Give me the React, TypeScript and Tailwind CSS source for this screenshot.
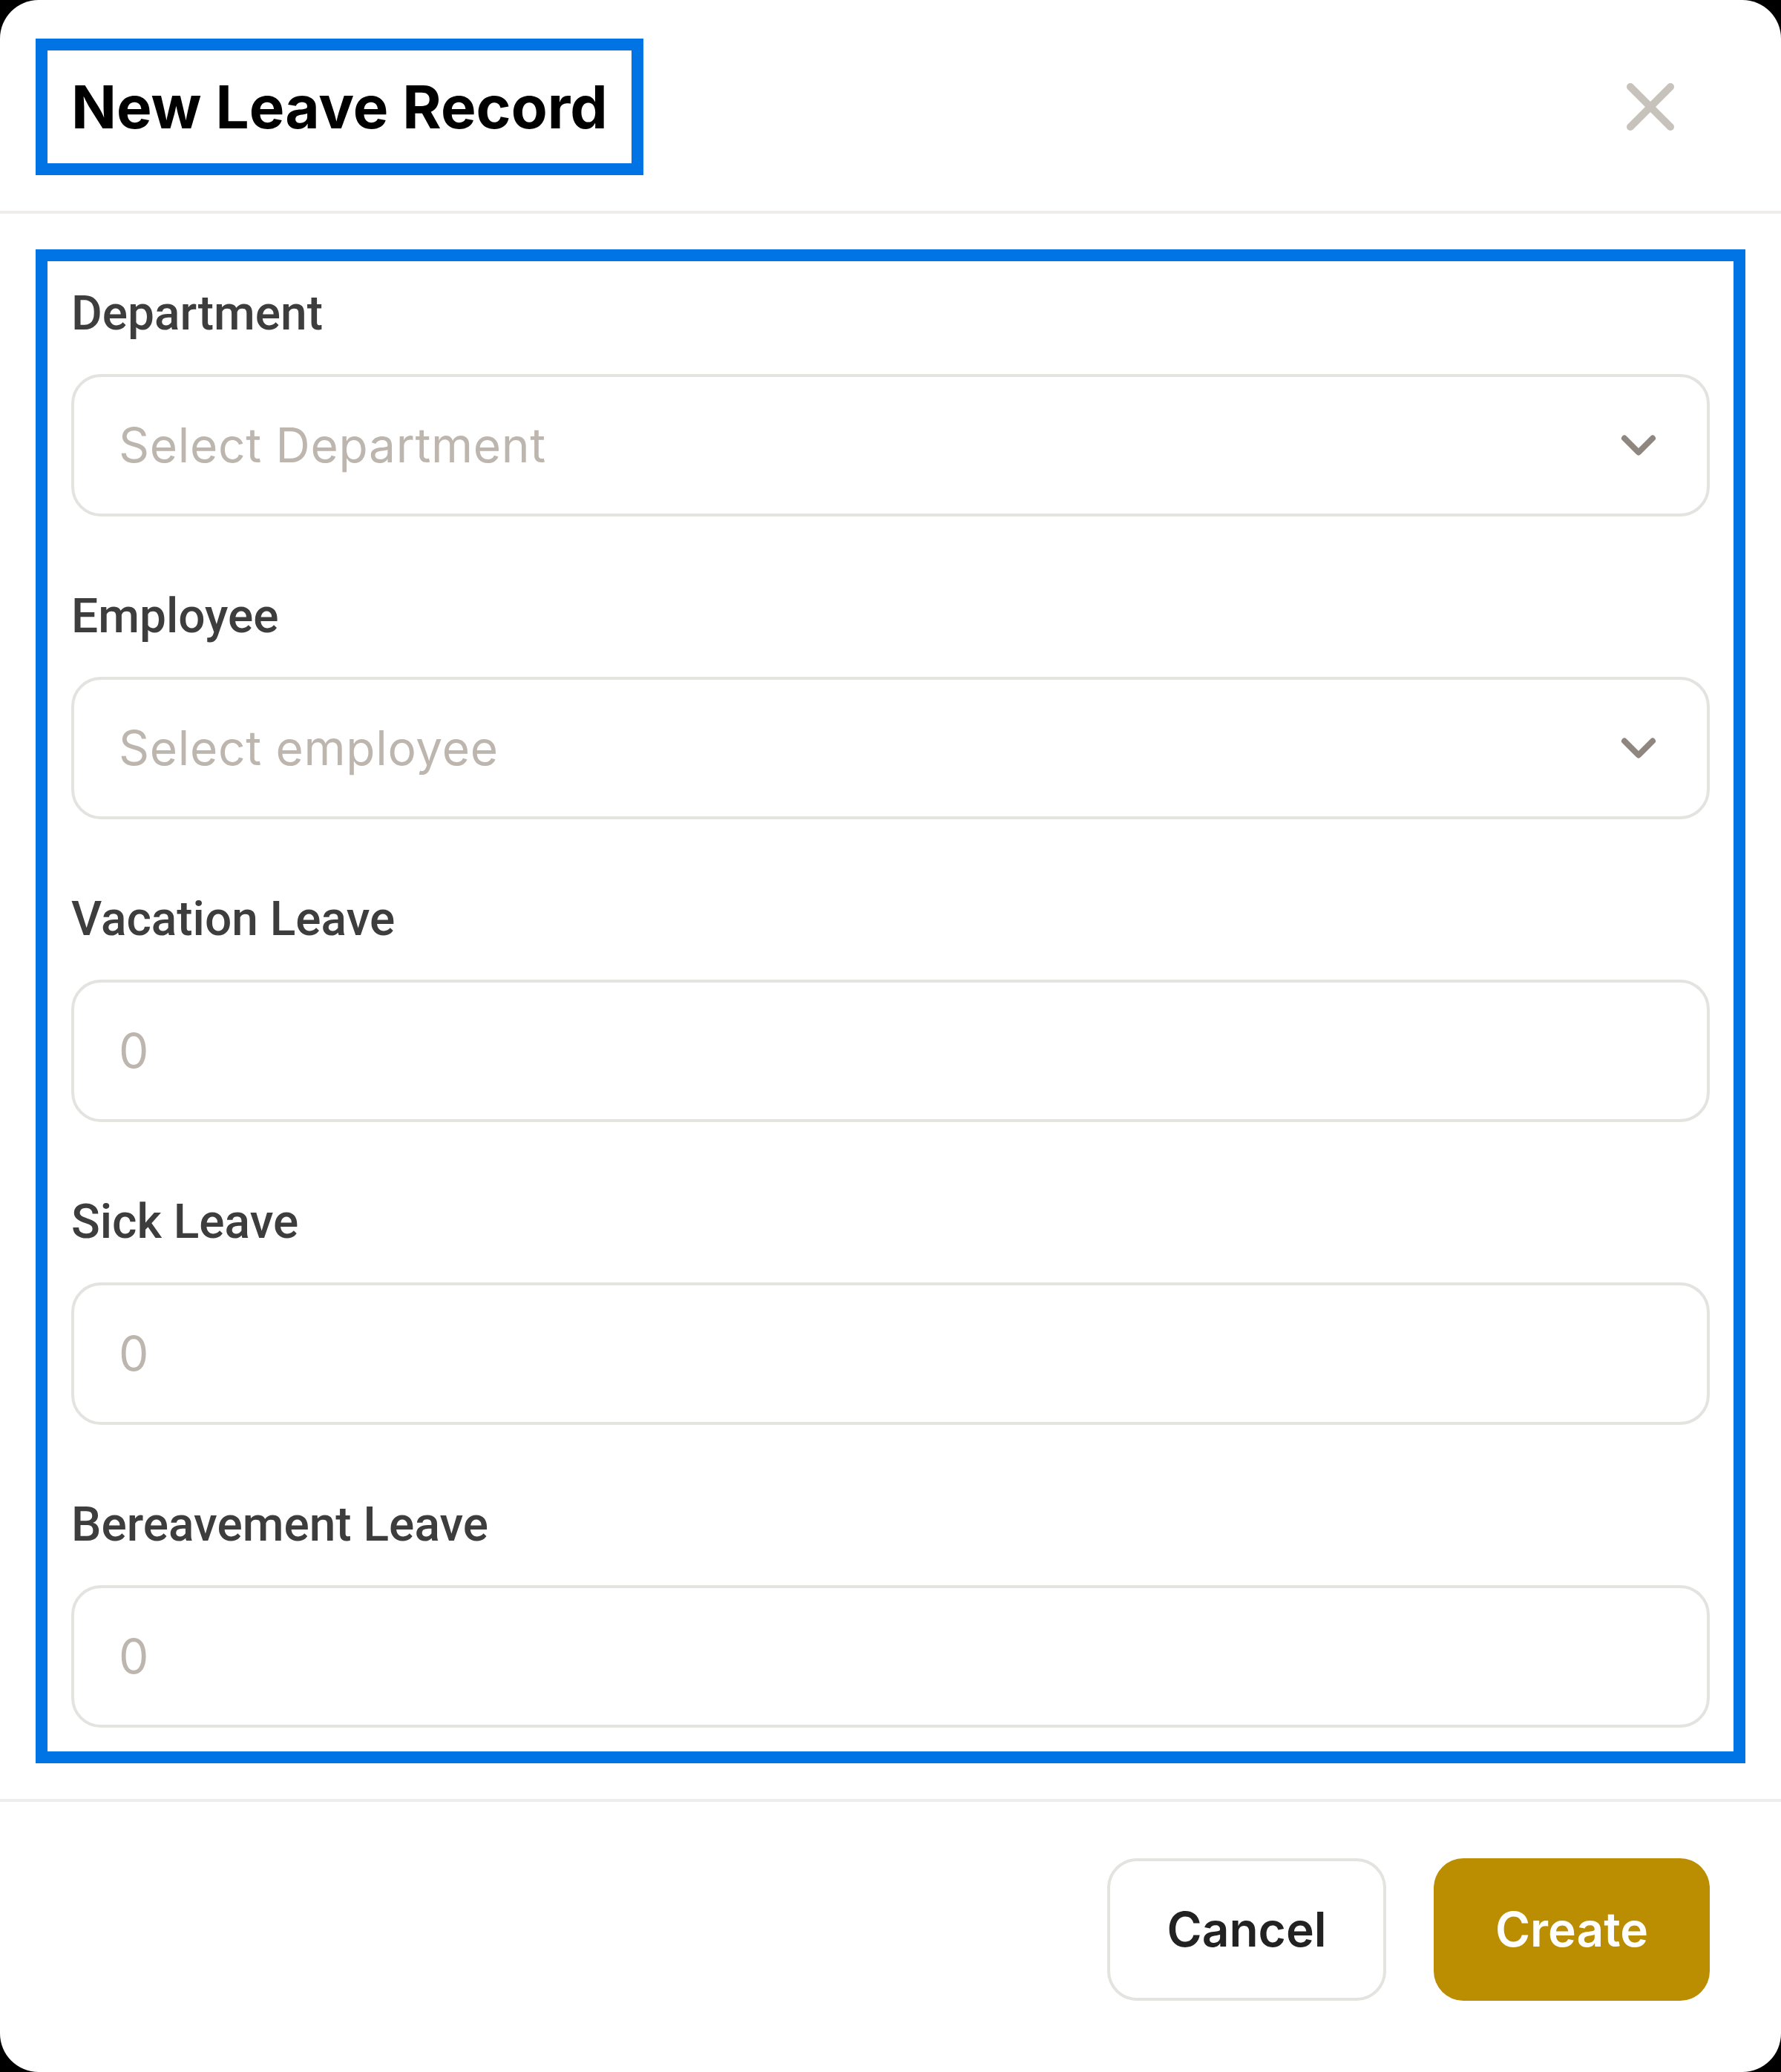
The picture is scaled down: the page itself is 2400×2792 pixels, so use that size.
import React from "react";

const fields = [
  { label: "Department", placeholder: "Select Department", select: true },
  { label: "Employee", placeholder: "Select employee", select: true },
  { label: "Vacation Leave", placeholder: "0", select: false },
  { label: "Sick Leave", placeholder: "0", select: false },
  { label: "Bereavement Leave", placeholder: "0", select: false },
];

function Chevron() {
  return (
    <svg width="48" height="48" viewBox="0 0 48 48" fill="none" className="shrink-0">
      <polyline
        points="5,14.5 24,33.5 43,14.5"
        stroke="#8F8680"
        strokeWidth="8"
        strokeLinecap="round"
        strokeLinejoin="round"
      />
    </svg>
  );
}

function CloseIcon() {
  return (
    <svg width="64" height="64" viewBox="0 0 64 64" fill="none" className="shrink-0">
      <line x1="5" y1="5" x2="59" y2="59" stroke="#C8C2BC" strokeWidth="10" strokeLinecap="round" />
      <line x1="59" y1="5" x2="5" y2="59" stroke="#C8C2BC" strokeWidth="10" strokeLinecap="round" />
    </svg>
  );
}

export default function App() {
  return (
    <div className="bg-black w-[2400px] h-[2792px]">
      <div className="w-[2400px] h-[2792px] bg-white rounded-[52px] overflow-hidden flex flex-col font-['Inter',sans-serif]">
        {/* Header */}
        <div className="flex items-center justify-between pt-[52px] pb-[48px] pl-[48px] pr-[144px] border-b-4 border-[#EEEDEB]">
          <div className="border-[16px] border-[#0074E4] px-[32px] py-[16px]">
            <h1 className="text-[80px] leading-[120px] font-bold text-black">New Leave Record</h1>
          </div>
          <CloseIcon />
        </div>

        {/* Body */}
        <div className="p-[48px]">
          <div className="border-[16px] border-[#0074E4] p-[32px] flex flex-col gap-[96px]">
            {fields.map((f) => (
              <div key={f.label} className="flex flex-col">
                <label className="font-['Roboto',sans-serif] text-[64px] leading-[76px] font-medium text-[#3D3D3D] pt-[1px]">
                  {f.label}
                </label>
                <div className="mt-[43px] h-[192px] border-4 border-[#E3E3DF] rounded-[40px] flex items-center justify-between pl-[60px] pr-[68px]">
                  <span className="text-[64px] leading-none tracking-[0.7px] text-[#BDB6AF]">{f.placeholder}</span>
                  {f.select ? <Chevron /> : null}
                </div>
              </div>
            ))}
          </div>
        </div>

        {/* Footer */}
        <div className="border-t-4 border-[#EEEDEB] flex justify-end gap-[64px] pt-[76px] pb-[96px] pr-[96px]">
          <button className="w-[376px] h-[192px] rounded-[40px] border-4 border-[#E3E3DF] bg-white text-[64px] font-semibold text-[#222222] flex items-center justify-center">
            Cancel
          </button>
          <button className="w-[372px] h-[192px] rounded-[40px] bg-[#BB8D00] text-[64px] font-semibold text-white flex items-center justify-center">
            Create
          </button>
        </div>
      </div>
    </div>
  );
}
